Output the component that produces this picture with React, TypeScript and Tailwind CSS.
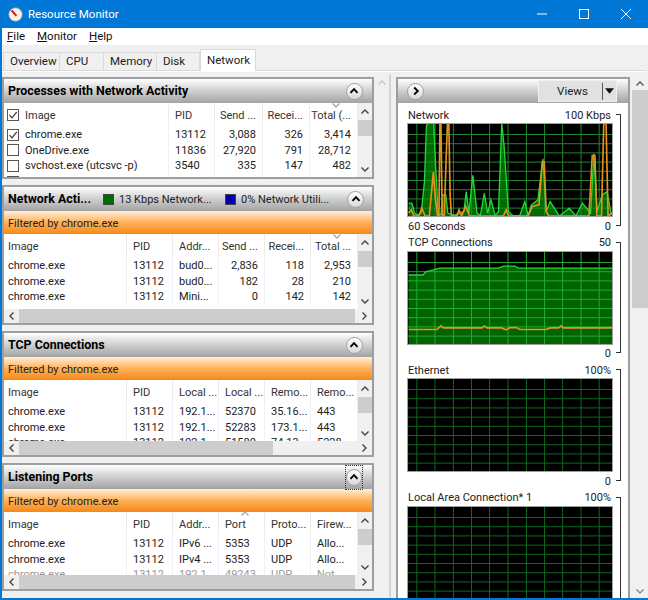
import type { ReactNode } from "react";

const vLines = [47, 102, 158, 213, 268, 324, 380, 435, 490, 546, 601];
const hLines = [82, 110, 138, 166, 194, 222, 250, 278, 306, 334];

const networkGreen =
  "22,315 32,315 40,345 50,352 60,345 70,250 76,80 80,72 98,72 104,200 112,350 120,350 125,290 135,290 141,345 160,352 190,340 197,280 205,345 217,230 230,345 240,352 252,285 262,345 272,305 285,352 295,340 305,72 312,140 325,340 340,354 360,352 375,310 385,352 395,320 415,305 430,180 440,340 452,310 480,354 510,330 530,354 550,315 575,345 585,165 595,340 610,290 625,280 636,340 640,350";
const networkOrange =
  "22,345 30,335 38,354 52,354 62,330 72,354 85,354 97,220 103,300 110,354 114,354 117,72 120,72 124,354 130,354 137,150 140,72 144,72 148,290 152,354 168,354 175,335 183,354 195,325 207,354 310,354 318,335 326,354 385,354 398,325 418,320 428,190 434,190 440,340 448,354 570,354 580,170 588,170 594,354 608,354 615,72 622,72 628,354 640,345";
const tcpGreen = "22,120 65,120 75,110 95,105 115,99 295,99 310,93 345,93 355,99 640,99";
const tcpOrange =
  "22,286 108,286 120,275 128,281 245,281 252,275 260,281 305,281 318,287 330,280 350,280 360,286 440,286 452,281 478,281 485,275 492,281 640,281";

function Chevron({ dir = "up", className = "" }: { dir?: "up" | "down" | "left" | "right"; className?: string }) {
  const d = {
    up: "M1.5 6.5 5 3l3.5 3.5",
    down: "M1.5 3.5 5 7l3.5-3.5",
    left: "M6.5 1.5 3 5l3.5 3.5",
    right: "M3.5 1.5 7 5 3.5 8.5",
  }[dir];
  return (
    <svg viewBox="0 0 10 10" className={`h-[10px] w-[10px] ${className}`} fill="none" stroke="currentColor" strokeWidth="1.4">
      <path d={d} />
    </svg>
  );
}

function RoundButton({ dir = "up" }: { dir?: "up" | "right" }) {
  return (
    <div className="flex h-[17px] w-[17px] items-center justify-center rounded-full border border-[#a0a0a0] bg-gradient-to-b from-white to-[#d8d8d8] text-black">
      <svg viewBox="0 0 10 10" className="h-[10px] w-[10px]" fill="none" stroke="currentColor" strokeWidth="1.9">
        <path d={dir === "up" ? "M1.5 6.8 5 3.2l3.5 3.6" : "M3.2 1.5 6.8 5 3.2 8.5"} />
      </svg>
    </div>
  );
}

function CheckBox({ checked = false }: { checked?: boolean }) {
  return (
    <div className="flex h-[12px] w-[12px] shrink-0 items-center justify-center border border-[#555] bg-white">
      {checked && (
        <svg viewBox="0 0 10 10" className="h-[10px] w-[10px]" fill="none" stroke="#333" strokeWidth="1.2">
          <path d="M1.5 5.2 4 7.8 8.8 1.8" />
        </svg>
      )}
    </div>
  );
}

function VScroll() {
  return (
    <div className="flex w-[14px] shrink-0 flex-col items-center bg-[#f0f0f0] text-[#444]">
      <div className="flex h-[17px] items-center">
        <Chevron dir="up" />
      </div>
      <div className="h-[16px] w-full bg-[#cdcdcd]" />
      <div className="flex-1" />
      <div className="flex h-[17px] items-center">
        <Chevron dir="down" />
      </div>
    </div>
  );
}

function HScroll({ thumb }: { thumb: string }) {
  return (
    <div className="flex h-[14px] items-center bg-[#f0f0f0] text-[#444]">
      <div className="flex w-[15px] shrink-0 justify-center">
        <Chevron dir="left" />
      </div>
      <div className="h-full flex-1">
        <div className={`h-full bg-[#cdcdcd] ${thumb}`} />
      </div>
      <div className="flex w-[17px] shrink-0 justify-center">
        <Chevron dir="right" />
      </div>
    </div>
  );
}

type TableProps = {
  cols: string;
  head: string[];
  rows: string[][];
  rightFrom?: number;
  rightTo?: number;
  height: string;
  checks?: boolean[];
  fadeLast?: boolean;
  sort?: ReactNode;
};

function Table({ cols, head, rows, rightFrom = 99, rightTo = 99, height, checks, fadeLast, sort }: TableProps) {
  const align = (i: number) => {
    if (i >= rightFrom && i <= rightTo) return "justify-end pr-[6px]";
    return i === 0 ? "justify-start pl-[4px]" : "justify-start pl-[6px]";
  };
  return (
    <div className={`flex ${height}`}>
      <div className="relative min-w-0 flex-1 overflow-hidden bg-white">
        {sort}
        <div className="grid h-[23px] items-stretch" style={{ gridTemplateColumns: cols }}>
          {head.map((h, i) => (
            <div key={i} className={`flex items-center border-r border-[#ececec] pt-[1px] whitespace-nowrap text-[#333] ${align(i)}`}>
              {i === 0 && checks && (
                <span className="mr-[6px] ml-[-1px]">
                  <CheckBox checked />
                </span>
              )}
              <span>{h}</span>
            </div>
          ))}
        </div>
        {rows.map((row, r) => (
          <div
            key={r}
            className={`grid h-[15.6px] ${fadeLast && r === rows.length - 1 ? "text-[#999]" : "text-[#222]"}`}
            style={{ gridTemplateColumns: cols }}
          >
            {row.map((c, i) => (
              <div key={i} className={`flex items-center border-r border-[#eef2f8] pt-[2px] whitespace-nowrap ${align(i)}`}>
                {i === 0 && checks && (
                  <span className="mr-[6px] ml-[-1px]">
                    <CheckBox checked={checks[r]} />
                  </span>
                )}
                {c}
              </div>
            ))}
          </div>
        ))}
      </div>
      <VScroll />
    </div>
  );
}

function PanelHeader({ title, children, focus }: { title: string; children?: ReactNode; focus?: boolean }) {
  return (
    <div className="flex h-[24px] items-center bg-gradient-to-b from-white via-[#cfcfcf] to-[#a3a3a3] pr-[9px] pl-[4px]">
      <span className="pb-[2px] text-[12.4px] font-bold whitespace-nowrap text-black">{title}</span>
      {children}
      <div
        className={`ml-auto flex h-[25px] w-[18px] items-center justify-center ${
          focus ? "border border-dotted border-[#333]" : ""
        }`}
      >
        <RoundButton />
      </div>
    </div>
  );
}

function Filter() {
  return (
    <div className="flex h-[23px] items-center bg-gradient-to-b from-[#ffeed6] via-[#ffb055] to-[#f78810] pt-[2px] pl-[4px] text-[#222]">
      Filtered by chrome.exe
    </div>
  );
}

function Swatch({ color, text }: { color: string; text: string }) {
  return (
    <div className="flex w-[122px] items-center text-[#222]">
      <span className={`mr-[5px] h-[11px] w-[11px] border border-[#444] ${color}`} />
      <span className="whitespace-nowrap">{text}</span>
    </div>
  );
}

function Panel({ children }: { children: ReactNode }) {
  return <section className="border-2 border-[#9b9fa1] bg-white">{children}</section>;
}

function Graph({ kind }: { kind: "network" | "tcp" | "idle" }) {
  const gridColor = kind === "tcp" ? "#1fae32" : kind === "network" ? "#1f8a2c" : "#0f6a1e";
  return (
    <svg
      viewBox="20 50 620 280"
      preserveAspectRatio="none"
      className="block h-[94px] w-[206px] border border-[#a0a0a0] bg-black"
    >
      {kind === "tcp" && <polygon points={`${tcpGreen} 640,330 22,330`} fill="#006400" />}
      {kind === "network" && (
        <g transform="translate(0 -24)">
          <polygon points={`${networkGreen} 640,354 22,354`} fill="#006b00" />
        </g>
      )}
      {vLines.map((x) => (
        <line key={x} x1={x} x2={x} y1="50" y2="330" stroke={gridColor} strokeWidth="3" />
      ))}
      {hLines.map((y) => (
        <line key={y} x1="20" x2="640" y1={y} y2={y} stroke={gridColor} strokeWidth="3" />
      ))}
      {kind === "tcp" && (
        <>
          <polyline points={tcpGreen} fill="none" stroke="#22d83a" strokeWidth="4" />
          <polyline points={tcpOrange} fill="none" stroke="#e8921c" strokeWidth="5" />
        </>
      )}
      {kind === "network" && (
        <g transform="translate(0 -24)">
          <polyline points={networkGreen} fill="none" stroke="#22d83a" strokeWidth="4" />
          <polyline points={networkOrange} fill="none" stroke="#e8921c" strokeWidth="5" />
        </g>
      )}
    </svg>
  );
}

function GraphBlock({
  title,
  max,
  bottomLeft,
  kind,
}: {
  title: string;
  max: string;
  bottomLeft?: string;
  kind: "network" | "tcp" | "idle";
}) {
  return (
    <div className="flex">
      <div className="w-[206px]">
        <div className="flex h-[17px] items-center justify-between pt-[1px] pr-[2px] pl-[1px] text-[#222]">
          <span>{title}</span>
          <span>{max}</span>
        </div>
        <Graph kind={kind} />
        <div className="flex h-[16.5px] items-center justify-between pt-[2px] pr-[2px] pl-[1px] text-[#222]">
          <span>{bottomLeft}</span>
          <span>0</span>
        </div>
      </div>
      <div className="mt-[8px] mb-[8px] ml-[3px] w-[5px] border-t border-r border-b border-[#333]" />
    </div>
  );
}

const img = "chrome.exe";

export default function App() {
  return (
    <div className="flex h-[600px] w-[648px] flex-col overflow-hidden border-b-2 border-l-2 border-[#0078d7] bg-[#f0f0f0] text-[11px] leading-[13px] [font-family:Roboto,sans-serif]">
      {/* title bar */}
      <header className="-ml-[2px] flex h-[28px] shrink-0 items-center bg-[#0078d7] pr-[17px] pl-[8px] text-white">
        <svg viewBox="0 0 16 16" className="mr-[5px] h-[15px] w-[15px]">
          <circle cx="8" cy="8" r="7.2" fill="#f4efe8" stroke="#9a9a9a" strokeWidth="0.8" />
          <path d="M3.8 3.6 9 9.5" stroke="#c5202a" strokeWidth="2.2" />
        </svg>
        <span className="text-[11.5px]">Resource Monitor</span>
        <div className="ml-auto flex items-center gap-[32px]">
          <svg viewBox="0 0 10 10" className="h-[10px] w-[10px]" stroke="white" fill="none">
            <path d="M0 5h10" />
          </svg>
          <svg viewBox="0 0 10 10" className="h-[10px] w-[10px]" stroke="white" fill="none">
            <rect x="0.5" y="0.5" width="9" height="9" />
          </svg>
          <svg viewBox="0 0 10 10" className="h-[10px] w-[10px]" stroke="white" fill="none">
            <path d="M0 0l10 10M10 0 0 10" />
          </svg>
        </div>
      </header>

      {/* menu */}
      <nav className="flex h-[17px] shrink-0 items-center gap-[12px] bg-white pl-[5px] text-[11.5px] text-[#111]">
        <span><u>F</u>ile</span>
        <span><u>M</u>onitor</span>
        <span><u>H</u>elp</span>
      </nav>

      {/* tabs */}
      <div className="flex h-[32px] shrink-0 flex-col">
        <div className="flex h-[25px] items-end pl-[1px] text-[11.5px] text-[#222]">
          <div className="flex h-[18px] w-[57px] items-center border border-b-0 border-[#d9d9d9] pl-[6px]">Overview</div>
          <div className="flex h-[18px] w-[44px] items-center border-r border-t border-[#d9d9d9] pl-[6px]">CPU</div>
          <div className="flex h-[18px] w-[53px] items-center border-r border-t border-[#d9d9d9] pl-[6px]">Memory</div>
          <div className="flex h-[18px] w-[43px] items-center border-r border-t border-[#d9d9d9] pl-[6px]">Disk</div>
          <div className="relative z-10 -mb-[1px] flex h-[22px] w-[56px] items-center border border-b-0 border-[#d9d9d9] bg-white pl-[6px]">
            Network
          </div>
        </div>
        <div className="mr-[2px] h-[2px] border-t border-[#d9d9d9] bg-white" />
      </div>

      <main className="flex min-h-0 flex-1">
        {/* left column */}
        <div className="flex w-[372px] shrink-0 flex-col gap-[6px]">
          <Panel>
            <PanelHeader title="Processes with Network Activity" />
            <Table
              height="h-[74px]"
              cols="165px 46px 48px 47px 1fr"
              head={["Image", "PID", "Send ...", "Recei...", "Total (..."]}
              rows={[
                ["chrome.exe", "13112", "3,088", "326", "3,414"],
                ["OneDrive.exe", "11836", "27,920", "791", "28,712"],
                ["svchost.exe (utcsvc -p)", "3540", "335", "147", "482"],
                ["", "", "", "", ""],
              ]}
              rightFrom={2}
              rightTo={4}
              checks={[true, false, false, false]}
              sort={<Chevron dir="down" className="absolute top-[-3px] left-[327px] text-[#aaa]" />}
            />
          </Panel>

          <Panel>
            <PanelHeader title="Network Acti...">
              <div className="ml-[12px] flex">
                <Swatch color="bg-[#006b00]" text="13 Kbps Network..." />
                <Swatch color="bg-[#0000b0]" text="0% Network Utili..." />
              </div>
            </PanelHeader>
            <Filter />
            <Table
              height="h-[75px]"
              cols="123px 46px 46px 46px 46px 1fr"
              head={["Image", "PID", "Addr...", "Send ...", "Recei...", "Total ..."]}
              rows={[
                [img, "13112", "bud0...", "2,836", "118", "2,953"],
                [img, "13112", "bud0...", "182", "28", "210"],
                [img, "13112", "Mini...", "0", "142", "142"],
              ]}
              rightFrom={3}
              rightTo={5}
              sort={<Chevron dir="down" className="absolute top-[-3px] left-[328px] text-[#aaa]" />}
            />
            <HScroll thumb="w-full" />
          </Panel>

          <Panel>
            <PanelHeader title="TCP Connections" />
            <Filter />
            <Table
              height="h-[61px]"
              cols="123px 46px 46px 46px 46px 1fr"
              head={["Image", "PID", "Local ...", "Local ...", "Remo...", "Remo..."]}
              rows={[
                [img, "13112", "192.1...", "52370", "35.16...", "443"],
                [img, "13112", "192.1...", "52283", "173.1...", "443"],
                [img, "13112", "192.1...", "51580", "74.13...", "5228"],
              ]}
            />
            <HScroll thumb="w-[254px]" />
          </Panel>

          <Panel>
            <PanelHeader title="Listening Ports" focus />
            <Filter />
            <Table
              height="h-[63px]"
              cols="123px 46px 46px 46px 46px 1fr"
              head={["Image", "PID", "Addr...", "Port", "Proto...", "Firew..."]}
              rows={[
                [img, "13112", "IPv6 ...", "5353", "UDP", "Allo..."],
                [img, "13112", "IPv4 ...", "5353", "UDP", "Allo..."],
                [img, "13112", "192.1...", "49243", "UDP", "Not ..."],
              ]}
              fadeLast
              sort={<Chevron dir="up" className="absolute top-[-3px] left-[236px] text-[#aaa]" />}
            />
            <HScroll thumb="w-full" />
          </Panel>
        </div>

        {/* splitter */}
        <div className="flex w-[22px] shrink-0">
          <div className="flex w-[15px] justify-center pt-[1px] text-[#c4c4c4]">
            <Chevron dir="up" />
          </div>
          <div className="-mt-[3px] h-[calc(100%+3px)] w-[2px] border-x border-[#d4d4d4] bg-white" />
        </div>

        {/* right column */}
        <div className="mr-[2px] w-[234px] shrink-0 border-x-2 border-t-2 border-[#9b9fa1] bg-white">
          <div className="flex h-[24px] items-center bg-gradient-to-b from-white via-[#cfcfcf] to-[#a3a3a3] pr-[11px] pl-[9px]">
            <RoundButton dir="right" />
            <div className="ml-auto flex h-[22px] w-[79px] items-center border border-[#efefef] bg-[#e1e1e1] text-[#222]">
              <span className="flex-1 pl-[4px] text-center text-[11.5px]">Views</span>
              <span className="h-[17px] w-px bg-[#555]" />
              <svg viewBox="0 0 10 6" className="mx-[2px] h-[6px] w-[9px]">
                <path d="M0 0h10L5 6z" fill="#111" />
              </svg>
            </div>
          </div>
          <div className="flex flex-col pt-[3px] pl-[9px]">
            <GraphBlock title="Network" max="100 Kbps" bottomLeft="60 Seconds" kind="network" />
            <GraphBlock title="TCP Connections" max="50" kind="tcp" />
            <GraphBlock title="Ethernet" max="100%" kind="idle" />
            <GraphBlock title="Local Area Connection* 1" max="100%" kind="idle" />
          </div>
        </div>

        {/* page scrollbar */}
        <div className="flex w-[16px] shrink-0 flex-col items-center bg-[#f0f0f0] text-[#555]">
          <div className="flex h-[13px] items-center">
            <Chevron dir="up" />
          </div>
          <div className="h-[218px] w-full bg-[#cdcdcd]" />
          <div className="flex-1" />
          <div className="flex h-[14px] items-center text-[#888]">
            <Chevron dir="down" />
          </div>
        </div>
      </main>
    </div>
  );
}
